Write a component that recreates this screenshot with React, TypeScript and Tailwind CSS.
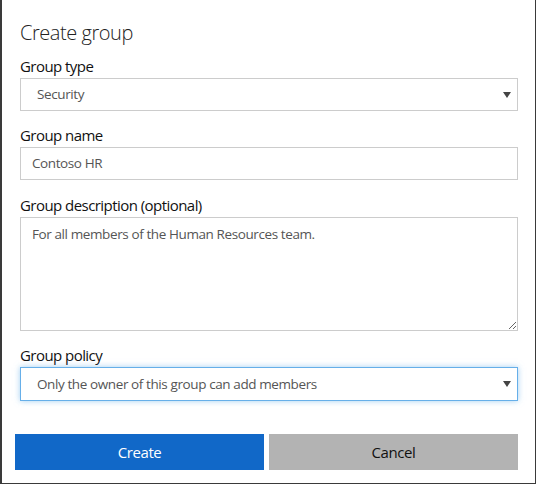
import React from "react";

const font = { fontFamily: '"Open Sans", "Noto Sans", sans-serif' };

function Caret() {
  return (
    <svg width="8" height="7" viewBox="0 0 8 7" className="absolute right-[6px] top-1/2 -translate-y-1/2">
      <path d="M0 0.5 H8 L4 6.5 Z" fill="#444" />
    </svg>
  );
}

export default function App() {
  return (
    <div className="w-[537px] h-[485px] bg-white" style={font}>
      <div className="w-[536px] h-[484px] border-l-2 border-r border-b border-[#3a3a3a] flex flex-col">
        <div className="pl-[18px] pr-[17px] pt-[19px]">
          <h1 className="text-[20px] leading-[28px] font-light text-[#222] tracking-[-0.45px]">Create group</h1>

          <div className="mt-[9px]">
            <label className="block text-[15px] leading-5 text-[#111] mb-[2px] tracking-[-0.55px]">Group type</label>
            <div className="relative h-[33px] border border-[#cccccc] flex items-center pl-[16px] text-[13.5px] text-[#555] tracking-[-0.4px]">
              Security
              <Caret />
            </div>
          </div>

          <div className="mt-[14px]">
            <label className="block text-[15px] leading-5 text-[#111] mb-[2px] tracking-[-0.55px]">Group name</label>
            <div className="h-[33px] border border-[#cccccc] flex items-center pl-[11px] text-[13.5px] text-[#555] tracking-[-0.4px]">
              Contoso HR
            </div>
          </div>

          <div className="mt-[15px]">
            <label className="block text-[15px] leading-5 text-[#111] mb-[2px] tracking-[-0.55px]">Group description (optional)</label>
            <textarea
              readOnly
              defaultValue="For all members of the Human Resources team."
              className="block w-full h-[114px] border border-[#cccccc] px-[11px] py-[6px] text-[13.5px] leading-5 text-[#555] outline-none resize-y tracking-[-0.4px]"
              style={font}
            />
          </div>

          <div className="mt-[14px]">
            <label className="block text-[15px] leading-5 text-[#111] mb-[2px] tracking-[-0.55px]">Group policy</label>
            <div className="relative h-[34px] border border-[#66afe9] shadow-[0_0_6px_rgba(102,175,233,0.6)] flex items-center pl-[16px] text-[13.5px] text-[#555] tracking-[-0.4px]">
              Only the owner of this group can add members
              <Caret />
            </div>
          </div>
        </div>

        <div className="mt-[33px] pl-[13px] pr-[17px] flex gap-[5px]">
          <button className="flex-1 h-[36px] bg-[#1168c8] text-white text-[15px] tracking-[-0.4px]">Create</button>
          <button className="flex-1 h-[36px] bg-[#b3b3b3] text-[#111] text-[15px] tracking-[-0.4px]">Cancel</button>
        </div>
      </div>
    </div>
  );
}
